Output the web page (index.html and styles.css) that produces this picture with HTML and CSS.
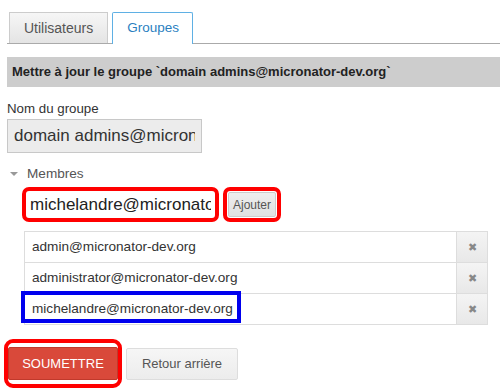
FILE: index.html
```html
<!DOCTYPE html>
<html lang="fr">

<head>
    <meta charset="UTF-8">
    <meta name="viewport" content="width=device-width, initial-scale=1.0">
    <title>Groupes</title>
    <link rel="stylesheet" href="styles.css">
</head>

<body>

    <div class="page">
        <div class="tabs">
            <a class="tab">Utilisateurs</a>
            <a class="tab active">Groupes</a>
        </div>

        <div class="panel-title">Mettre à jour le groupe `domain admins@micronator-dev.org`</div>

        <form class="group-form">
            <label class="field-label">Nom du groupe</label>
            <input class="name-input" type="text" value="domain admins@micronator-dev.org" readonly>

            <div class="section-toggle"><span class="caret"></span>Membres</div>

            <div class="add-row">
                <span class="mark"><input class="member-input" type="text" value="michelandre@micronator-dev.org"></span>
                <span class="mark"><button type="button" class="btn-add">Ajouter</button></span>
            </div>

            <div class="members">
                <div class="member">
                    <span class="addr">admin@micronator-dev.org</span>
                    <span class="remove">&#x2716;</span>
                </div>
                <div class="member">
                    <span class="addr">administrator@micronator-dev.org</span>
                    <span class="remove">&#x2716;</span>
                </div>
                <div class="member marked">
                    <span class="addr">michelandre@micronator-dev.org</span>
                    <span class="remove">&#x2716;</span>
                </div>
            </div>

            <div class="actions">
                <span class="mark mark-big"><button type="submit" class="btn-submit">SOUMETTRE</button></span>
                <button type="button" class="btn-back">Retour arrière</button>
            </div>
        </form>
    </div>

</body>

</html>
```

FILE: styles.css
```css
body {
    margin: 0;
    font-family: "Liberation Sans", Arial, sans-serif;
    color: #333;
    background: #fff;
    overflow: hidden;
}

.page {
    padding: 12px 0 0 7px;
}

/* onglets */
.tabs {
    display: flex;
    gap: 4px;
    padding-left: 2px;
    border-bottom: 1px solid #aaa;
}

.tab {
    height: 31px;
    box-sizing: border-box;
    padding: 0 14px;
    line-height: 30px;
    font-size: 14px;
    color: #555;
    border: 1px solid #ccc;
    border-bottom: none;
    background: linear-gradient(#f6f6f6, #e4e4e4);
}

.tab.active {
    margin-bottom: -1px;
    height: 32px;
    padding: 0 13px 0 14px;
    background: #fff;
    color: #2a7fbf;
    font-size: 13.5px;
    border-color: #5fb0e4;
    border-radius: 2px 2px 0 0;
}

.panel-title {
    margin-top: 13px;
    height: 30px;
    line-height: 30px;
    padding-left: 5px;
    background: #cdcdcd;
    font-size: 13px;
    font-weight: bold;
    color: #222;
}

/* formulaire */
.field-label {
    display: block;
    margin-top: 14px;
    font-size: 13.3px;
    color: #333;
}

.name-input {
    display: block;
    margin-top: 3px;
    width: 195px;
    height: 34px;
    box-sizing: border-box;
    padding: 0 6px;
    border: 1px solid #c8c8c8;
    background: #ececec;
    font-family: inherit;
    font-size: 17px;
    color: #333;
    outline: none;
}

.section-toggle {
    margin-top: 13px;
    font-size: 13.6px;
    color: #555;
    display: flex;
    align-items: center;
}

.caret {
    width: 0;
    height: 0;
    margin: 0 9px 0 3px;
    border-left: 4px solid transparent;
    border-right: 4px solid transparent;
    border-top: 4px solid #999;
}

.add-row {
    display: flex;
    gap: 4px;
    margin: 6px 0 0 15px;
}

.mark {
    display: inline-flex;
    border: 4px solid #f00;
    border-radius: 7px;
    padding: 1px;
}

.member-input {
    width: 187px;
    height: 25px;
    box-sizing: border-box;
    padding: 0 3px;
    border: none;
    font-family: inherit;
    font-size: 17px;
    color: #222;
    outline: none;
}

.btn-add {
    height: 25px;
    padding: 0 4px;
    border: 1px solid #ccc;
    border-radius: 2px;
    background: linear-gradient(#eee, #e0e0e0);
    font-family: inherit;
    font-size: 12px;
    color: #555;
}

/* liste des membres */
.members {
    margin: 9px 0 0 17px;
    width: 462px;
    border: 1px solid #ddd;
    border-bottom: none;
}

.member {
    position: relative;
    display: flex;
    height: 30px;
    border-bottom: 1px solid #ddd;
}

.addr {
    flex: 1;
    padding-left: 7px;
    line-height: 30px;
    font-size: 13.6px;
    color: #333;
}

.remove {
    width: 30px;
    border-left: 1px solid #ddd;
    background: linear-gradient(#f4f4f4, #e8e8e8);
    text-align: center;
    line-height: 30px;
    font-size: 11px;
    color: #888;
}

.member.marked::after {
    content: "";
    position: absolute;
    left: -4px;
    top: -3px;
    width: 212px;
    height: 24px;
    border: 4px solid #0000ee;
}

/* boutons */
.actions {
    display: flex;
    align-items: center;
    gap: 4px;
    margin: 14px 0 0 -3px;
}

.mark-big {
    padding: 4px 0;
    border-radius: 9px;
}

.btn-submit {
    width: 110px;
    height: 33px;
    border: 1px solid #c0392b;
    border-radius: 2px;
    background: #d9493a;
    color: #fff;
    font-family: inherit;
    font-size: 13px;
}

.btn-back {
    width: 112px;
    height: 32px;
    border: 1px solid #ddd;
    border-radius: 2px;
    background: linear-gradient(#f6f6f6, #ececec);
    color: #555;
    font-family: inherit;
    font-size: 13px;
}
```
